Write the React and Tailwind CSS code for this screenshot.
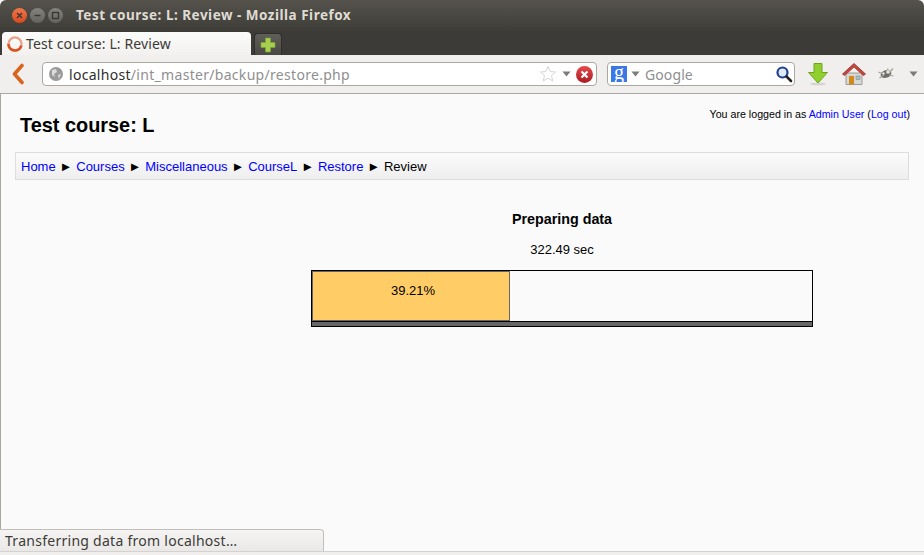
import React from "react";

const ui = { fontFamily: '"Noto Sans", sans-serif' };

function WinBtn({ color, children }) {
  return (
    <div className={`w-[15px] h-[15px] rounded-full flex items-center justify-center ${color}`}>
      <svg width="9" height="9" viewBox="0 0 9 9" fill="none" stroke="#3a3833" strokeWidth="1.4">{children}</svg>
    </div>
  );
}

function Caret({ className = "" }) {
  return (
    <svg width="9" height="6" viewBox="0 0 9 6" className={className}>
      <path d="M0.5 0.5H8.5L4.5 5.5Z" fill="#7b7b78" />
    </svg>
  );
}

function Sep() {
  return <span className="text-[13px] text-black mx-[3.85px]">►</span>;
}

function A({ children }) {
  return <span className="text-[#0000ff]">{children}</span>;
}

export default function App() {
  return (
    <div className="w-[924px] h-[555px] relative overflow-hidden flex flex-col bg-[#fafafa]" style={{ fontFamily: '"Liberation Sans", Arial, sans-serif' }}>
      {/* Title bar */}
      <div className="h-[31px] shrink-0 flex items-center pl-[12px] rounded-t-[6px] bg-gradient-to-b from-[#55534c] to-[#3f3d38]">
        <div className="flex gap-[3px] items-center">
          <WinBtn color="bg-gradient-to-b from-[#f2764a] to-[#d8491c]"><path d="M2 2L7 7M7 2L2 7" /></WinBtn>
          <WinBtn color="bg-gradient-to-b from-[#85837d] to-[#65635d]"><path d="M1.5 4.5H7.5" /></WinBtn>
          <WinBtn color="bg-gradient-to-b from-[#85837d] to-[#65635d]"><rect x="1.5" y="1.5" width="6" height="6" /></WinBtn>
        </div>
        <span className="ml-[13px] text-[13.5px] font-bold text-[#dfdbd2] tracking-[0.5px] whitespace-nowrap" style={ui}>Test course: L: Review - Mozilla Firefox</span>
      </div>

      {/* Tab strip */}
      <div className="h-[24px] shrink-0 flex items-end pl-[2px] bg-[#3c3b37] gap-[2px]">
        <div className="w-[249px] h-[23px] bg-gradient-to-b from-[#fbfbfa] to-[#f2f1f0] rounded-t-[4px] flex items-center pl-[4px]">
          <svg width="18" height="18" viewBox="0 0 16 16" fill="none">
            <circle cx="8" cy="8" r="5.8" stroke="#e8a48a" strokeWidth="2" />
            <path d="M2.2 8A5.8 5.8 0 0 0 13.6 9.5" stroke="#d9541e" strokeWidth="2.4" />
          </svg>
          <span className="ml-[2px] text-[14px] tracking-[0.13px] text-[#3c3b37] whitespace-nowrap" style={ui}>Test course: L: Review</span>
        </div>
        <div className="w-[28px] h-[22px] ml-[1px] rounded-t-[4px] bg-gradient-to-b from-[#5f5e58] to-[#4a4944] border border-b-0 border-[#2f2e2a] flex items-center justify-center">
          <svg width="16" height="16" viewBox="0 0 16 16">
            <path d="M5.5 1H10.500V5.500H15V10.500H10.500V15H5.500V10.500H1V5.500H5.500Z" fill="#a5cf4c" stroke="#7fa636" strokeWidth="0.6" />
          </svg>
        </div>
      </div>

      {/* Toolbar */}
      <div className="h-[39px] shrink-0 flex items-center bg-[#f0efed] border-b border-[#aaa8a3] pl-[10px]">
        <svg width="16" height="22" viewBox="0 0 16 22" fill="none">
          <path d="M12 2.500L4.500 11L12 19.500" stroke="#d8641f" strokeWidth="3.600" strokeLinejoin="round" strokeLinecap="round" />
        </svg>
        <div className="ml-[16px] w-[555px] h-[24px] bg-white border border-[#aaa8a3] rounded-[4px] flex items-center pl-[6px] pr-[3px]">
          <svg width="14" height="14" viewBox="0 0 14 14">
            <circle cx="7" cy="7" r="7" fill="#9a9a9a" />
            <path d="M3 3L7 2L8 5L5 7L6 10L3 8ZM9 8L12 7L10 12Z" fill="#dcdcdc" />
          </svg>
          <span className="ml-[6px] text-[14px] tracking-[0.3px] whitespace-nowrap" style={ui}>
            <span className="text-[#2f2f2f]">localhost</span>
            <span className="text-[#8f8f8f]">/int_master/backup/restore.php</span>
          </span>
          <div className="ml-auto flex items-center">
            <svg width="18" height="18" viewBox="0 0 18 18">
              <path d="M9 1.500L11.200 6.500L16.500 7L12.500 10.600L13.700 16L9 13.200L4.300 16L5.500 10.600L1.500 7L6.800 6.500Z" fill="#fff" stroke="#d5d5d3" strokeWidth="1" />
            </svg>
            <Caret className="ml-[5px]" />
            <div className="ml-[5px] w-[17px] h-[17px] rounded-full bg-gradient-to-b from-[#e8474c] to-[#a81c22] flex items-center justify-center">
              <svg width="9" height="9" viewBox="0 0 9 9"><path d="M1.500 1.500L7.500 7.500M7.500 1.500L1.500 7.500" stroke="#fff" strokeWidth="2.200" /></svg>
            </div>
          </div>
        </div>
        <div className="ml-[10px] w-[188px] h-[24px] bg-white border border-[#aaa8a3] rounded-[4px] flex items-center pl-[3px] pr-[1px]">
          <div className="w-[16px] h-[16px] bg-[#3b78e7] flex items-center justify-center text-white text-[20px] leading-[12px] pb-[4px]" style={{ fontFamily: '"Liberation Serif", serif' }}>g</div>
          <Caret className="ml-[4px]" />
          <span className="ml-[5px] text-[14px] tracking-[0.1px] text-[#8f8f8f]" style={ui}>Google</span>
          <svg width="18" height="18" viewBox="0 0 18 18" className="ml-auto" fill="none">
            <circle cx="7.500" cy="7.500" r="5" stroke="#1f3f8f" strokeWidth="2.200" fill="#dfe9f7" />
            <path d="M11.500 11.500L16 16" stroke="#222" strokeWidth="2.600" strokeLinecap="round" />
          </svg>
        </div>
        <svg width="22" height="24" viewBox="0 0 22 24" className="ml-[12px]">
          <ellipse cx="11" cy="22" rx="8" ry="1.500" fill="#d5d4d0" />
          <path d="M7 1.500H15V10.500H20.500L11 21L1.500 10.500H7Z" fill="#8fd02e" stroke="#6ea51f" strokeWidth="1" />
        </svg>
        <svg width="26" height="24" viewBox="0 0 26 24" className="ml-[12px]">
          <path d="M5 11H21V22.500H5Z" fill="#d8d8d4" stroke="#8a8a86" strokeWidth="0.800" />
          <path d="M1.500 12L13 1.500L24.500 12L22.500 13.500L13 5L3.500 13.500Z" fill="#c0473f" stroke="#9c2f29" strokeWidth="0.800" />
          <path d="M3.500 13.500L13 5L22.500 13.500L21 11L13 3.500L5 11Z" fill="#c0473f" />
          <rect x="8" y="14" width="5" height="8.500" fill="#d08a1e" />
          <rect x="15" y="14" width="4" height="3.500" fill="#a9c0cc" stroke="#7c7c78" strokeWidth="0.500" />
        </svg>
        <svg width="18" height="14" viewBox="0 0 18 14" className="ml-[10px]">
          <ellipse cx="9" cy="7" rx="5.500" ry="3.800" fill="#6f6f68" transform="rotate(-20 9 7)" />
          <path d="M1.500 5L6 7M2.500 11L7 8M11 1.500L10 6M16 1.500L12 6M16.500 9L12 8" stroke="#a0a098" strokeWidth="1.200" />
          <circle cx="11" cy="5" r="1.800" fill="#e6e6e2" />
          <circle cx="6.500" cy="6.500" r="1.200" fill="#e6e6e2" />
        </svg>
        <Caret className="ml-[14px]" />
      </div>

      {/* Page */}
      <div className="flex-1 relative border-l border-[#a8a6a0] bg-[#fafafa] text-black">
        <div className="flex justify-between items-start">
          <h1 className="ml-[19px] mt-[20px] text-[19.9px] leading-[23px] font-bold">Test course: L</h1>
          <div className="mr-[14px] mt-[14px] text-[10.66px] leading-[13px]">
            You are logged in as <A>Admin User</A> (<A>Log out</A>)
          </div>
        </div>
        <div className="ml-[14px] mr-[15px] mt-[15px] h-[28px] border border-[#dddddd] bg-gradient-to-b from-[#fbfbfb] to-[#eeeeee] flex items-center pl-[5px] pt-[1px] text-[13px] whitespace-nowrap">
          <A>Home</A><Sep /><A>Courses</A><Sep /><A>Miscellaneous</A><Sep /><A>CourseL</A><Sep /><A>Restore</A><Sep /><span>Review</span>
        </div>
        <div className="mt-[31px] ml-[310px] w-[502px]">
          <div className="text-center text-[14.3px] leading-[16px] font-bold">Preparing data</div>
          <div className="mt-[15px] text-center text-[13px] leading-[15px]">322.49 sec</div>
          <div className="mt-[13px] h-[57px] border border-black flex flex-col">
            <div className="h-[50px] flex border-b border-black box-content">
              <div className="w-[198px] h-[50px] bg-[#ffcc66] border border-[#666666] text-center text-[13px] leading-[15px] pt-[11px] pl-[4px]">39.21%</div>
            </div>
            <div className="flex-1 bg-[#666666]" />
          </div>
        </div>
      </div>

      {/* Status panel */}
      <div className="absolute left-0 bottom-[3px] w-[324px] h-[23px] bg-gradient-to-b from-[#f5f4f3] to-[#e9e8e6] border-t border-r border-[#c0bfbb] rounded-tr-[4px] pl-[5px] text-[14px] tracking-[0.27px] leading-[22px] text-[#3c3b37] whitespace-nowrap" style={ui}>
        Transferring data from localhost…
      </div>
      <div className="absolute left-0 right-0 bottom-0 h-[4px] bg-[#f0efed] border-t border-[#d3d2ce]" />
    </div>
  );
}
